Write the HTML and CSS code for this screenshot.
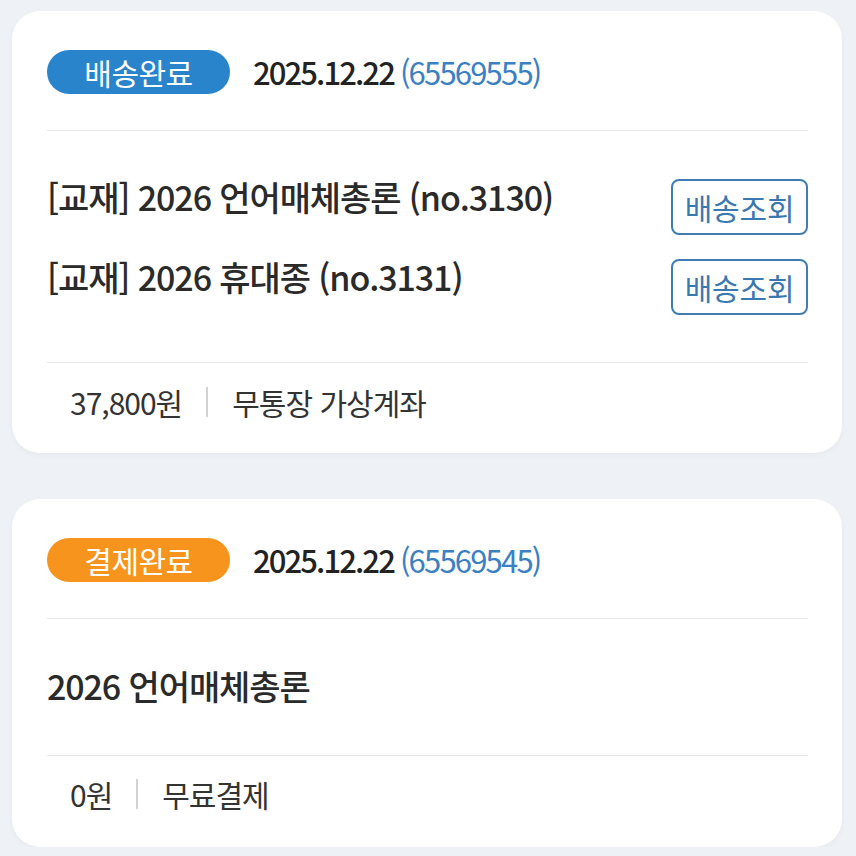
FILE: index.html
```html
<!DOCTYPE html>
<html lang="ko">
<head>
<meta charset="utf-8">
<link rel="stylesheet" href="styles.css">
</head>
<body>
<div class="page">
  <section class="card">
    <div class="head">
      <span class="badge badge-blue">배송완료</span>
      <span class="date">2025.12.22</span>
      <span class="order">(65569555)</span>
    </div>
    <div class="items">
      <div class="item">
        <span class="item-name">[교재] 2026 언어매체총론 (no.3130)</span>
        <button class="track">배송조회</button>
      </div>
      <div class="item">
        <span class="item-name">[교재] 2026 휴대종 (no.3131)</span>
        <button class="track">배송조회</button>
      </div>
    </div>
    <div class="foot">
      <span class="price">37,800원</span>
      <span class="sep"></span>
      <span class="method">무통장 가상계좌</span>
    </div>
  </section>
  <section class="card card2">
    <div class="head">
      <span class="badge badge-orange">결제완료</span>
      <span class="date">2025.12.22</span>
      <span class="order">(65569545)</span>
    </div>
    <div class="items single">
      <div class="item">
        <span class="item-name">2026 언어매체총론</span>
      </div>
    </div>
    <div class="foot">
      <span class="price">0원</span>
      <span class="sep"></span>
      <span class="method">무료결제</span>
    </div>
  </section>
</div>
</body>
</html>
```
FILE: styles.css
```css
* { box-sizing: border-box; }
html, body { margin: 0; padding: 0; }
body {
  background: #eef2f6;
  font-family: "Noto Sans CJK KR", "Noto Sans", sans-serif;
  color: #2a2a2a;
}
.page {
  padding: 11px 14px 0 12px;
  display: flex;
  flex-direction: column;
  gap: 46px;
}
.card {
  background: #fff;
  border-radius: 28px;
  padding: 0 34px 0 35px;
  box-shadow: 0 2px 6px rgba(0,0,0,0.04);
}
.head {
  display: flex;
  align-items: center;
  height: 120px;
  padding-top: 2px;
  border-bottom: 1.5px solid #e6e6e6;
}
.badge {
  width: 183px;
  height: 44px;
  border-radius: 22px;
  color: #fff;
  font-size: 30px;
  line-height: 1;
  display: flex;
  align-items: center;
  justify-content: center;
  letter-spacing: -0.5px;
  margin-right: 23px;
}
.badge-blue { background: #2a84cc; }
.badge-orange { background: #f7941d; }
.date {
  font-size: 31px;
  font-weight: 500;
  letter-spacing: -1.9px;
  color: #222;
  margin-right: 6px;
}
.order {
  font-size: 31px;
  letter-spacing: -1.8px;
  color: #3a80c2;
}
.items {
  padding: 48px 0 47px;
  display: flex;
  flex-direction: column;
  gap: 24px;
  border-bottom: 1.5px solid #e6e6e6;
}
.items.single { padding: 39px 0 41px; }
.item {
  display: flex;
  align-items: center;
  justify-content: space-between;
  min-height: 56px;
}
.item-name {
  font-size: 34px;
  font-weight: 500;
  letter-spacing: -1.1px;
  color: #2a2a2a;
  line-height: 34px;
  padding-bottom: 20px;
}
.single .item-name { padding-bottom: 0; }
.track {
  width: 137px;
  height: 56px;
  border: 2px solid #3f7eb5;
  border-radius: 8px;
  background: #fff;
  color: #3a78b2;
  font-family: inherit;
  font-size: 30px;
  line-height: 1;
  letter-spacing: -0.2px;
  padding: 0;
}
.foot {
  display: flex;
  align-items: center;
  height: 90px;
  padding-left: 23px;
  padding-bottom: 12px;
  font-size: 30px;
  letter-spacing: -1px;
  color: #333;
}
.sep {
  width: 2px;
  height: 30px;
  background: #d2d2d2;
  margin: 0 24px;
}
.card2 .foot { height: 91px; padding-bottom: 16px; }
```
